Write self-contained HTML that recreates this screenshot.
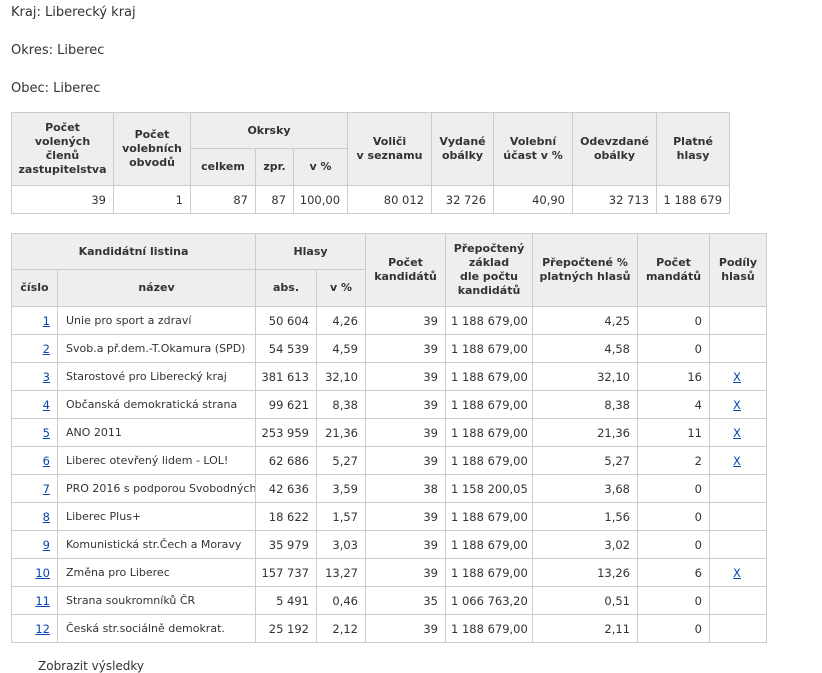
<!DOCTYPE html>
<html><head><meta charset="utf-8"><style>
body{margin:0;background:#fff;font-family:"DejaVu Sans","Liberation Sans",sans-serif;font-size:11.5px;color:#333;position:relative;width:822px;height:665px;overflow:hidden}
p{position:absolute;left:11px;margin:0;font-size:13px}
table{position:absolute;border-collapse:collapse;table-layout:fixed}
td,th{border:1px solid #ccc;padding:0 7px 0 5px;overflow:hidden;white-space:nowrap}
th{background:#eee;font-weight:bold;font-size:11px;line-height:14px;text-align:center;color:#333;padding:0 3px}
td{text-align:right;height:27px}
td.l{text-align:left;padding-left:8px;font-size:11px}
td.c{text-align:center}
a{color:#0645ad;text-decoration:underline}
</style></head><body>
<p style="top:5px">Kraj: Liberecký kraj</p>
<p style="top:43px">Okres: Liberec</p>
<p style="top:81px">Obec: Liberec</p>
<table style="left:11px;top:112px;width:718px">
<colgroup><col style="width:102px"><col style="width:77px"><col style="width:65px"><col style="width:38px"><col style="width:54px"><col style="width:84px"><col style="width:62px"><col style="width:79px"><col style="width:84px"><col style="width:73px"></colgroup>
<tr style="height:36px"><th rowspan="2">Počet<br>volených<br>členů<br>zastupitelstva</th><th rowspan="2">Počet<br>volebních<br>obvodů</th><th colspan="3">Okrsky</th><th rowspan="2">Voliči<br>v seznamu</th><th rowspan="2">Vydané<br>obálky</th><th rowspan="2">Volební<br>účast v %</th><th rowspan="2">Odevzdané<br>obálky</th><th rowspan="2">Platné<br>hlasy</th></tr>
<tr style="height:37px"><th>celkem</th><th>zpr.</th><th>v %</th></tr>
<tr><td>39</td><td>1</td><td>87</td><td>87</td><td>100,00</td><td>80 012</td><td>32 726</td><td>40,90</td><td>32 713</td><td>1 188 679</td></tr>
</table>
<table style="left:11px;top:233px;width:755px">
<colgroup><col style="width:46px"><col style="width:198px"><col style="width:61px"><col style="width:49px"><col style="width:80px"><col style="width:87px"><col style="width:105px"><col style="width:72px"><col style="width:57px"></colgroup>
<tr style="height:36px"><th colspan="2">Kandidátní listina</th><th colspan="2">Hlasy</th><th rowspan="2">Počet<br>kandidátů</th><th rowspan="2">Přepočtený<br>základ<br>dle počtu<br>kandidátů</th><th rowspan="2">Přepočtené %<br>platných hlasů</th><th rowspan="2">Počet<br>mandátů</th><th rowspan="2">Podíly<br>hlasů</th></tr>
<tr style="height:37px"><th>číslo</th><th>název</th><th>abs.</th><th>v %</th></tr>
<tr><td><a>1</a></td><td class="l">Unie pro sport a zdraví</td><td>50 604</td><td>4,26</td><td>39</td><td>1 188 679,00</td><td>4,25</td><td>0</td><td></td></tr>
<tr><td><a>2</a></td><td class="l">Svob.a př.dem.-T.Okamura (SPD)</td><td>54 539</td><td>4,59</td><td>39</td><td>1 188 679,00</td><td>4,58</td><td>0</td><td></td></tr>
<tr><td><a>3</a></td><td class="l">Starostové pro Liberecký kraj</td><td>381 613</td><td>32,10</td><td>39</td><td>1 188 679,00</td><td>32,10</td><td>16</td><td class="c"><a>X</a></td></tr>
<tr><td><a>4</a></td><td class="l">Občanská demokratická strana</td><td>99 621</td><td>8,38</td><td>39</td><td>1 188 679,00</td><td>8,38</td><td>4</td><td class="c"><a>X</a></td></tr>
<tr><td><a>5</a></td><td class="l">ANO 2011</td><td>253 959</td><td>21,36</td><td>39</td><td>1 188 679,00</td><td>21,36</td><td>11</td><td class="c"><a>X</a></td></tr>
<tr><td><a>6</a></td><td class="l">Liberec otevřený lidem - LOL!</td><td>62 686</td><td>5,27</td><td>39</td><td>1 188 679,00</td><td>5,27</td><td>2</td><td class="c"><a>X</a></td></tr>
<tr><td><a>7</a></td><td class="l">PRO 2016 s podporou Svobodných</td><td>42 636</td><td>3,59</td><td>38</td><td>1 158 200,05</td><td>3,68</td><td>0</td><td></td></tr>
<tr><td><a>8</a></td><td class="l">Liberec Plus+</td><td>18 622</td><td>1,57</td><td>39</td><td>1 188 679,00</td><td>1,56</td><td>0</td><td></td></tr>
<tr><td><a>9</a></td><td class="l">Komunistická str.Čech a Moravy</td><td>35 979</td><td>3,03</td><td>39</td><td>1 188 679,00</td><td>3,02</td><td>0</td><td></td></tr>
<tr><td><a>10</a></td><td class="l">Změna pro Liberec</td><td>157 737</td><td>13,27</td><td>39</td><td>1 188 679,00</td><td>13,26</td><td>6</td><td class="c"><a>X</a></td></tr>
<tr><td><a>11</a></td><td class="l">Strana soukromníků ČR</td><td>5 491</td><td>0,46</td><td>35</td><td>1 066 763,20</td><td>0,51</td><td>0</td><td></td></tr>
<tr><td><a>12</a></td><td class="l">Česká str.sociálně demokrat.</td><td>25 192</td><td>2,12</td><td>39</td><td>1 188 679,00</td><td>2,11</td><td>0</td><td></td></tr>
</table>
<p style="top:659px;left:38px;font-size:12px">Zobrazit výsledky</p>
</body></html>
